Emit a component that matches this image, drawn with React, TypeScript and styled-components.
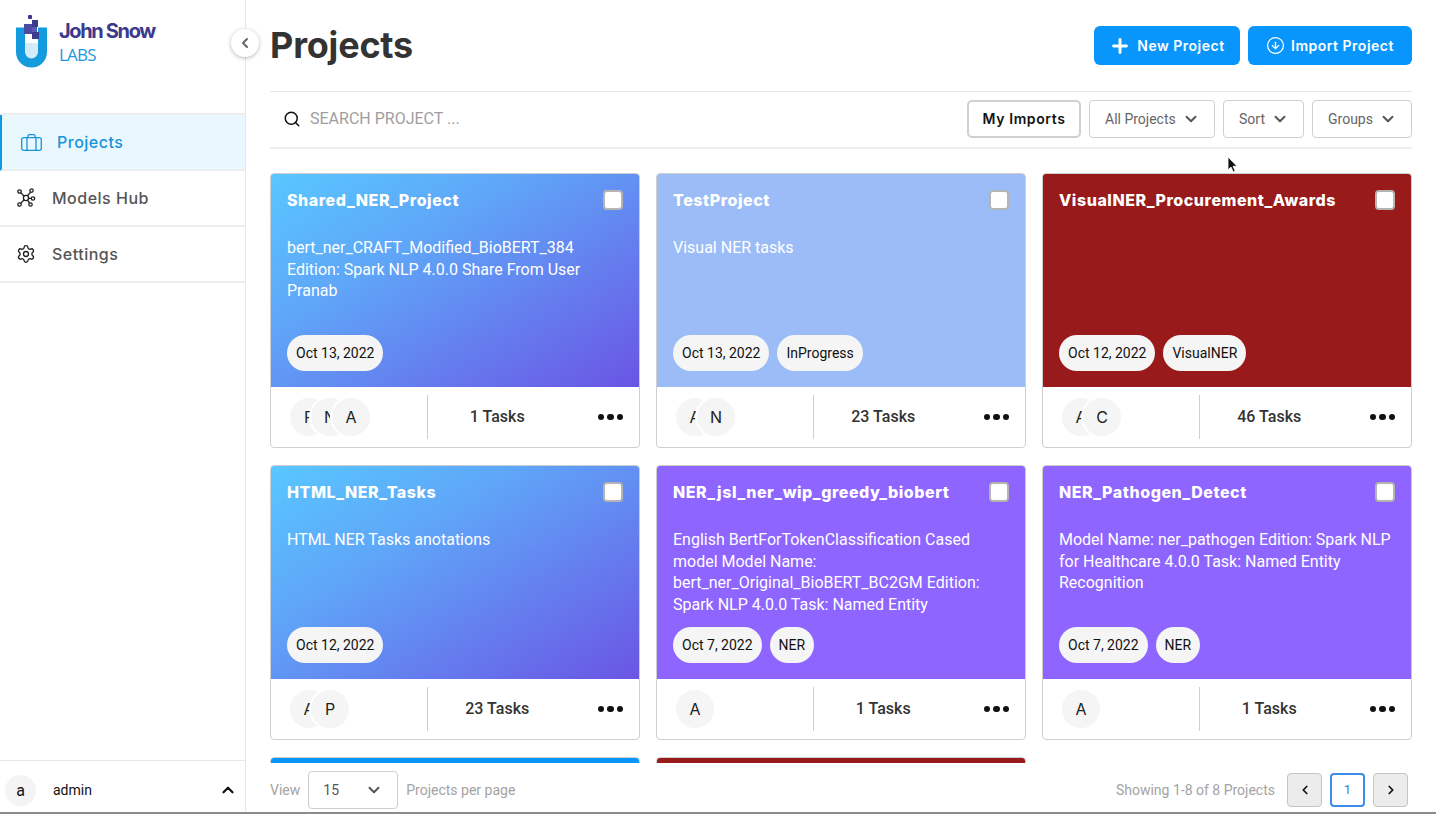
import React from 'react';
import styled, { createGlobalStyle } from 'styled-components';
import { ChevronDown, ChevronLeft, ChevronRight, ChevronUp, CircleArrowDown, Plus, Search, Settings } from 'lucide-react';

const heading = `Inter, "Liberation Sans", sans-serif`;

const GlobalStyle = createGlobalStyle`
  html, body { margin: 0; padding: 0; height: 100%; background: #fff; overflow: hidden; }
  body { font-family: Roboto, "Liberation Sans", sans-serif; color: #333; }
  * { box-sizing: border-box; }
`;

const Page = styled.div`
  position: relative;
  display: flex;
  width: 1436px;
  height: 814px;
  border-bottom: 2px solid #8c8c8c;
  overflow: hidden;
`;

const Sidebar = styled.aside`
  position: relative;
  display: flex;
  flex-direction: column;
  flex: 0 0 246px;
  border-right: 1px solid #e8e8e8;
`;

const Brand = styled.div`
  display: flex;
  align-items: flex-start;
  gap: 11px;
  height: 113px;
  padding: 14px 0 0 15px;
`;

const BrandText = styled.div`
  display: flex;
  flex-direction: column;
  padding-top: 5px;
`;

const BrandName = styled.span`
  font: 700 20px/24px ${heading};
  letter-spacing: -1.35px;
  color: #3b3a8c;
`;

const BrandSub = styled.span`
  font: 400 17px/24px "Open Sans", sans-serif;
  letter-spacing: -0.8px;
  color: #1d97dd;
`;

const CollapseButton = styled.button`
  position: absolute;
  top: 29px;
  left: 231px;
  display: flex;
  align-items: center;
  justify-content: center;
  width: 28px;
  height: 28px;
  padding: 0;
  border: 0;
  border-radius: 50%;
  background: #fff;
  color: #666;
  box-shadow: 0 1px 4px rgba(0, 0, 0, 0.28);
`;

const Nav = styled.nav`
  display: flex;
  flex-direction: column;
  border-top: 2px solid #eee;
`;

const NavItem = styled.div<{ $active?: boolean }>`
  display: flex;
  align-items: center;
  gap: ${(p) => (p.$active ? '15px' : '16px')};
  height: 56px;
  padding-left: ${(p) => (p.$active ? '19px' : '16px')};
  border-bottom: 2px solid #eee;
  border-left: ${(p) => (p.$active ? '2px solid #0e9ae0' : '0')};
  background: ${(p) => (p.$active ? '#e9f8fe' : '#fff')};
  color: ${(p) => (p.$active ? '#1793d9' : '#555')};
  font: 500 16px/20px ${heading};
  letter-spacing: 0.5px;
`;

const UserRow = styled.div`
  display: flex;
  align-items: center;
  margin-top: auto;
  height: 52px;
  padding: 7px 8px 0 5px;
  border-top: 1px solid #e8e8e8;
  font-size: 14px;
  color: #111;
`;

const UserAvatar = styled.div`
  display: flex;
  align-items: center;
  justify-content: center;
  width: 31px;
  height: 31px;
  border-radius: 50%;
  background: #f4f4f4;
  font-size: 16px;
`;

const UserName = styled.span`
  flex: 1;
  margin-left: 17px;
`;

const Main = styled.main`
  display: flex;
  flex-direction: column;
  flex: 1;
  min-width: 0;
  padding: 0 24px;
`;

const Header = styled.header`
  display: flex;
  align-items: flex-start;
  justify-content: space-between;
  height: 92px;
  padding-top: 26px;
  border-bottom: 1px solid #e6e6e6;
`;

const Title = styled.h1`
  margin: -1px 0 0;
  font: 700 36px/40px ${heading};
  letter-spacing: -0.2px;
  color: #333;
`;

const HeaderActions = styled.div`
  display: flex;
  gap: 8px;
`;

const PrimaryButton = styled.button<{ $width: number }>`
  display: flex;
  align-items: center;
  justify-content: center;
  gap: 6px;
  width: ${(p) => p.$width}px;
  height: 39px;
  padding: 0;
  border: 0;
  border-radius: 6px;
  background: #0896fd;
  color: #fff;
  font: 600 14px/18px ${heading};
  letter-spacing: 0.5px;
`;

const Toolbar = styled.div`
  display: flex;
  align-items: center;
  gap: 8px;
  height: 57px;
  padding-bottom: 1px;
  border-bottom: 2px solid #eeeeee;
`;

const SearchBox = styled.div`
  display: flex;
  align-items: center;
  flex: 1;
  gap: 7px;
  padding-left: 13px;
  color: #111;
`;

const SearchInput = styled.input`
  flex: 1;
  border: 0;
  outline: 0;
  background: none;
  font: 400 16px/20px Roboto, sans-serif;
  &::placeholder { color: #9e9e9e; opacity: 1; }
`;

const ImportsButton = styled.button`
  width: 114px;
  height: 38px;
  padding: 0;
  border: 2px solid #d0d0d0;
  border-radius: 5px;
  background: #fff;
  color: #111;
  font: 600 14px/18px ${heading};
  letter-spacing: 0.6px;
`;

const FilterButton = styled.button<{ $width: number }>`
  display: flex;
  align-items: center;
  justify-content: space-between;
  width: ${(p) => p.$width}px;
  height: 38px;
  padding: 0 14px 0 15px;
  border: 1px solid #cfcfcf;
  border-radius: 4px;
  background: #fff;
  color: #666;
  font: 400 14px/18px Roboto, sans-serif;
  svg { color: #555; }
`;

const GridArea = styled.div`
  flex: 1;
  min-height: 0;
  overflow: hidden;
  padding-top: 24px;
`;

const Grid = styled.div`
  display: grid;
  grid-template-columns: repeat(3, 370px);
  grid-auto-rows: 275px;
  gap: 17px 16px;
`;

const Card = styled.article`
  display: flex;
  flex-direction: column;
  border: 1px solid #cfcfcf;
  border-radius: 4px;
  overflow: hidden;
  background: #fff;
`;

const CardTop = styled.div<{ $bg: string }>`
  display: flex;
  flex-direction: column;
  height: 213px;
  padding: 16px;
  background: ${(p) => p.$bg};
  color: #fff;
`;

const CardHeading = styled.div`
  display: flex;
  align-items: center;
  justify-content: space-between;
  height: 20px;
`;

const CardTitle = styled.h2`
  margin: -1px 0 0;
  font: 800 16px/20px ${heading};
  letter-spacing: 0.55px;
`;

const CheckBox = styled.span`
  width: 20px;
  height: 20px;
  border: 2px solid #b4b4b4;
  border-radius: 4px;
  background: #fff;
`;

const Description = styled.p`
  flex: 1;
  margin: 27px 0 0;
  font: 400 16px/21.6px Roboto, sans-serif;
  overflow: hidden;
  overflow-wrap: anywhere;
`;

const Chips = styled.div`
  display: flex;
  gap: 8px;
`;

const Chip = styled.span`
  display: flex;
  align-items: center;
  height: 36px;
  padding: 0 9px;
  border-radius: 18px;
  background: #f5f5f5;
  color: #111;
  font: 400 14px/18px Roboto, sans-serif;
`;

const CardFooter = styled.div`
  display: flex;
  align-items: center;
  flex: 1;
  padding: 0 16px 0 17px;
`;

const Avatars = styled.div`
  display: flex;
  flex: 0 0 139px;
`;

const Avatar = styled.span`
  display: flex;
  align-items: center;
  justify-content: center;
  width: 42px;
  height: 42px;
  margin-left: -21px;
  border: 2px solid #fff;
  border-radius: 50%;
  background: #f5f5f5;
  color: #222;
  font: 400 16px/20px Inter, sans-serif;
  &:first-child { margin-left: 0; }
`;

const Tasks = styled.div`
  flex: 1;
  align-self: stretch;
  margin: 8px 0;
  display: flex;
  align-items: center;
  justify-content: center;
  padding-right: 31px;
  border-left: 1px solid #cfcfcf;
  color: #333;
  font: 500 16px/20px Roboto, sans-serif;
`;

const Dots = styled.div`
  display: flex;
  gap: 3px;
  span { width: 6.5px; height: 6.5px; border-radius: 50%; background: #111; }
`;

const Footer = styled.footer`
  display: flex;
  align-items: center;
  gap: 8px;
  height: 49px;
  padding: 5px 4px 0 0;
  color: #a3a3a3;
  font: 400 14px/18px Roboto, sans-serif;
`;

const PerPage = styled.div`
  display: flex;
  align-items: center;
  justify-content: space-between;
  width: 90px;
  height: 38px;
  padding: 0 14px;
  border: 1px solid #cfcfcf;
  border-radius: 4px;
  color: #555;
  svg { color: #555; }
`;

const Showing = styled.span`
  margin-left: auto;
  margin-right: 4px;
`;

const PageButton = styled.button<{ $current?: boolean }>`
  display: flex;
  align-items: center;
  justify-content: center;
  width: 35px;
  height: 34px;
  padding: 0;
  border: ${(p) => (p.$current ? '2px solid #3d8ce8' : '1px solid #c4c4c4')};
  border-radius: 4px;
  background: ${(p) => (p.$current ? '#fff' : '#ececec')};
  color: ${(p) => (p.$current ? '#2f80e4' : '#111')};
  font: 400 13px/16px Roboto, sans-serif;
`;

const Pointer = styled.svg`
  position: absolute;
  top: 156px;
  left: 1227px;
`;

const blueGradient = 'linear-gradient(148deg, #58c7ff 0%, #5fa6f8 35%, #6a55e4 100%)';

const projects = [
  { title: 'Shared_NER_Project', text: 'bert_ner_CRAFT_Modified_BioBERT_384 Edition: Spark NLP 4.0.0 Share From User Pranab', chips: ['Oct 13, 2022'], users: ['P', 'N', 'A'], tasks: 1, bg: blueGradient },
  { title: 'TestProject', text: 'Visual NER tasks', chips: ['Oct 13, 2022', 'InProgress'], users: ['A', 'N'], tasks: 23, bg: '#9bbcf6' },
  { title: 'VisualNER_Procurement_Awards', text: '', chips: ['Oct 12, 2022', 'VisualNER'], users: ['A', 'C'], tasks: 46, bg: '#981a1a' },
  { title: 'HTML_NER_Tasks', text: 'HTML NER Tasks anotations', chips: ['Oct 12, 2022'], users: ['A', 'P'], tasks: 23, bg: blueGradient },
  { title: 'NER_jsl_ner_wip_greedy_biobert', text: 'English BertForTokenClassification Cased model Model Name: bert_ner_Original_BioBERT_BC2GM Edition: Spark NLP 4.0.0 Task: Named Entity', chips: ['Oct 7, 2022', 'NER'], users: ['A'], tasks: 1, bg: '#8e65ff' },
  { title: 'NER_Pathogen_Detect', text: 'Model Name: ner_pathogen Edition: Spark NLP for Healthcare 4.0.0 Task: Named Entity Recognition', chips: ['Oct 7, 2022', 'NER'], users: ['A'], tasks: 1, bg: '#8e65ff' },
];

// the last two cards only peek out above the footer, so they have no content
const peekingCards = ['#0896fd', '#981a1a'];

function Logo() {
  return (
    <svg width="33" height="54" viewBox="0 0 33 54">
      <rect x="8" y="29" width="17" height="20" fill="#d3ecfa" />
      <path d="M5.5 13.5V38a11 11 0 0 0 22 0V13.5" fill="none" stroke="#139bdd" strokeWidth="9" />
      <rect x="13" y="1" width="4" height="4" rx="1" fill="#3b3a8c" />
      <rect x="9" y="10" width="8" height="10" fill="#4a4aa0" />
      <rect x="17" y="6" width="6" height="7" fill="#3b3a8c" />
      <rect x="17" y="13" width="5" height="5" fill="#5a5ab0" />
      <rect x="17" y="18" width="7" height="7" fill="#3b3a8c" />
    </svg>
  );
}

function SuitcaseIcon() {
  return (
    <svg width="21" height="17" viewBox="0 0 21 17" fill="none" stroke="#1793d9" strokeWidth="1.3">
      <rect x="0.7" y="3.7" width="19.6" height="12.6" rx="2" />
      <path d="M6 4v12M15 4v12M7 3.7V2a1.3 1.3 0 0 1 1.3-1.3h4.4A1.3 1.3 0 0 1 14 2v1.7" />
    </svg>
  );
}

function HubIcon() {
  return (
    <svg width="20" height="20" viewBox="0 0 20 20" fill="none" stroke="#222" strokeWidth="1.3">
      <circle cx="10" cy="10" r="2.6" />
      <circle cx="3.5" cy="3.5" r="1.7" />
      <circle cx="15.5" cy="2.6" r="1.7" />
      <circle cx="17" cy="10.5" r="1.7" />
      <circle cx="3.5" cy="16.5" r="1.7" />
      <circle cx="14.5" cy="16.5" r="1.7" />
      <path d="M4.8 4.8l3.4 3.4M14.6 4.2L11.4 7.8M15.3 10.3h-2.7M4.8 15.2l3.4-3.4M13.6 15L11.4 12.2" />
    </svg>
  );
}

export default function App() {
  return (
    <Page>
      <GlobalStyle />
      <Sidebar>
        <Brand>
          <Logo />
          <BrandText>
            <BrandName>John Snow</BrandName>
            <BrandSub>LABS</BrandSub>
          </BrandText>
        </Brand>
        <CollapseButton aria-label="Collapse">
          <ChevronLeft size={16} strokeWidth={3} />
        </CollapseButton>
        <Nav>
          <NavItem $active>
            <SuitcaseIcon />
            Projects
          </NavItem>
          <NavItem>
            <HubIcon />
            Models Hub
          </NavItem>
          <NavItem>
            <Settings size={20} strokeWidth={1.6} color="#222" />
            Settings
          </NavItem>
        </Nav>
        <UserRow>
          <UserAvatar>a</UserAvatar>
          <UserName>admin</UserName>
          <ChevronUp size={18} strokeWidth={3} />
        </UserRow>
      </Sidebar>
      <Main>
        <Header>
          <Title>Projects</Title>
          <HeaderActions>
            <PrimaryButton $width={146}>
              <Plus size={22} strokeWidth={3.2} />
              New Project
            </PrimaryButton>
            <PrimaryButton $width={164}>
              <CircleArrowDown size={19} strokeWidth={1.6} />
              Import Project
            </PrimaryButton>
          </HeaderActions>
        </Header>
        <Toolbar>
          <SearchBox>
            <Search size={18} strokeWidth={2} />
            <SearchInput placeholder="SEARCH PROJECT ..." />
          </SearchBox>
          <ImportsButton>My Imports</ImportsButton>
          <FilterButton $width={126}>
            All Projects
            <ChevronDown size={18} strokeWidth={2.6} />
          </FilterButton>
          <FilterButton $width={81}>
            Sort
            <ChevronDown size={18} strokeWidth={2.6} />
          </FilterButton>
          <FilterButton $width={100}>
            Groups
            <ChevronDown size={18} strokeWidth={2.6} />
          </FilterButton>
        </Toolbar>
        <GridArea>
          <Grid>
            {projects.map((p) => (
              <Card key={p.title}>
                <CardTop $bg={p.bg}>
                  <CardHeading>
                    <CardTitle>{p.title}</CardTitle>
                    <CheckBox />
                  </CardHeading>
                  <Description>{p.text}</Description>
                  <Chips>
                    {p.chips.map((c) => (
                      <Chip key={c}>{c}</Chip>
                    ))}
                  </Chips>
                </CardTop>
                <CardFooter>
                  <Avatars>
                    {p.users.map((u, n) => (
                      <Avatar key={n}>{u}</Avatar>
                    ))}
                  </Avatars>
                  <Tasks>{p.tasks} Tasks</Tasks>
                  <Dots>
                    <span />
                    <span />
                    <span />
                  </Dots>
                </CardFooter>
              </Card>
            ))}
            {peekingCards.map((bg) => (
              <Card key={bg}>
                <CardTop $bg={bg} />
              </Card>
            ))}
          </Grid>
        </GridArea>
        <Footer>
          <span>View</span>
          <PerPage>
            15
            <ChevronDown size={18} strokeWidth={2.6} />
          </PerPage>
          <span>Projects per page</span>
          <Showing>Showing 1-8 of 8 Projects</Showing>
          <PageButton aria-label="Previous">
            <ChevronLeft size={14} strokeWidth={3} />
          </PageButton>
          <PageButton $current>1</PageButton>
          <PageButton aria-label="Next">
            <ChevronRight size={14} strokeWidth={3} />
          </PageButton>
        </Footer>
      </Main>
      <Pointer width="12" height="18" viewBox="0 0 12 18">
        <path d="M1 1v13l3-3 2.2 5 2-1-2.2-4.7H10z" fill="#111" stroke="#fff" strokeWidth="0.8" />
      </Pointer>
    </Page>
  );
}
